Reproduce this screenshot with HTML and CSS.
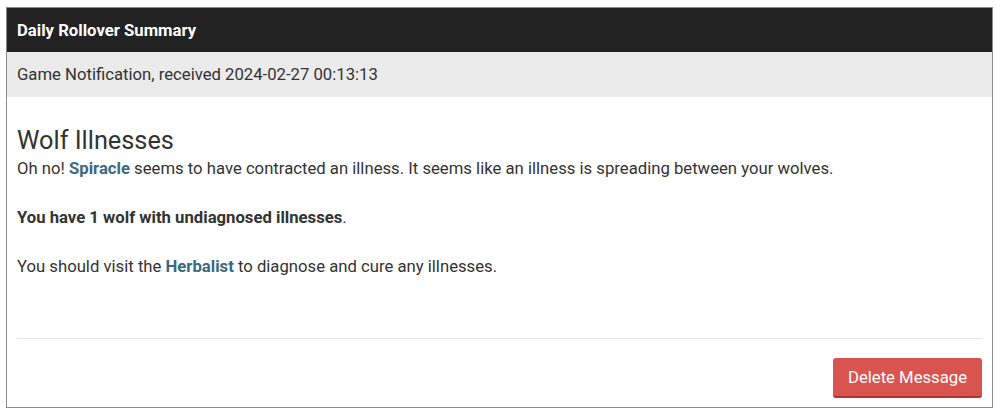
FILE: index.html
```html
<!DOCTYPE html>
<html>
<head>
<meta charset="utf-8">
<link rel="stylesheet" href="styles.css">
</head>
<body>
<div class="panel">
  <div class="panel-title">Daily Rollover Summary</div>
  <div class="panel-sub">Game Notification, received 2024-02-27 00:13:13</div>
  <div class="panel-body">
    <h2 class="msg-title">Wolf Illnesses</h2>
    <p class="msg-line">Oh no! <a class="link" href="#">Spiracle</a> seems to have contracted an illness. It seems like an illness is spreading between your wolves.</p>
    <p class="msg-line"><strong>You have 1 wolf with undiagnosed illnesses</strong>.</p>
    <p class="msg-line">You should visit the <a class="link" href="#">Herbalist</a> to diagnose and cure any illnesses.</p>
  </div>
  <div class="panel-footer">
    <button class="btn-delete">Delete Message</button>
  </div>
</div>
</body>
</html>
```
FILE: styles.css
```css
html, body {
  margin: 0;
  padding: 0;
  background: #fff;
}
body {
  font-family: Roboto, "Liberation Sans", sans-serif;
  color: #333;
  font-size: 16.7px;
}
.panel {
  margin: 7px 7px 0 6px;
  border: 1px solid #8c8c8c;
  height: 401px;
  box-sizing: border-box;
  display: flex;
  flex-direction: column;
}
.panel-title {
  background: #222;
  color: #fff;
  font-weight: 700;
  font-size: 16.7px;
  height: 44px;
  display: flex;
  align-items: center;
  padding: 0 10px;
}
.panel-sub {
  background: #ebebeb;
  height: 45px;
  display: flex;
  align-items: center;
  padding: 0 10px;
}
.panel-body {
  padding: 28px 10px 0 10px;
  flex: 1;
}
.msg-title {
  margin: 0;
  font-size: 25.3px;
  font-weight: 400;
  line-height: 32px;
}
.msg-line {
  margin: 0 0 25px 0;
  line-height: 24px;
}
.link {
  color: #3a6a80;
  font-weight: 700;
  text-decoration: none;
}
.panel-footer {
  margin: 0 10px;
  border-top: 1px solid #e6e6e6;
  padding: 19px 0 9px 0;
  display: flex;
  justify-content: flex-end;
}
.btn-delete {
  background: #d9534f;
  color: #fff;
  border: none;
  border-bottom: 2px solid #b0352f;
  border-radius: 3px;
  font-family: Roboto, "Liberation Sans", sans-serif;
  font-size: 16.7px;
  height: 40px;
  width: 149px;
  padding: 0;
}
```
